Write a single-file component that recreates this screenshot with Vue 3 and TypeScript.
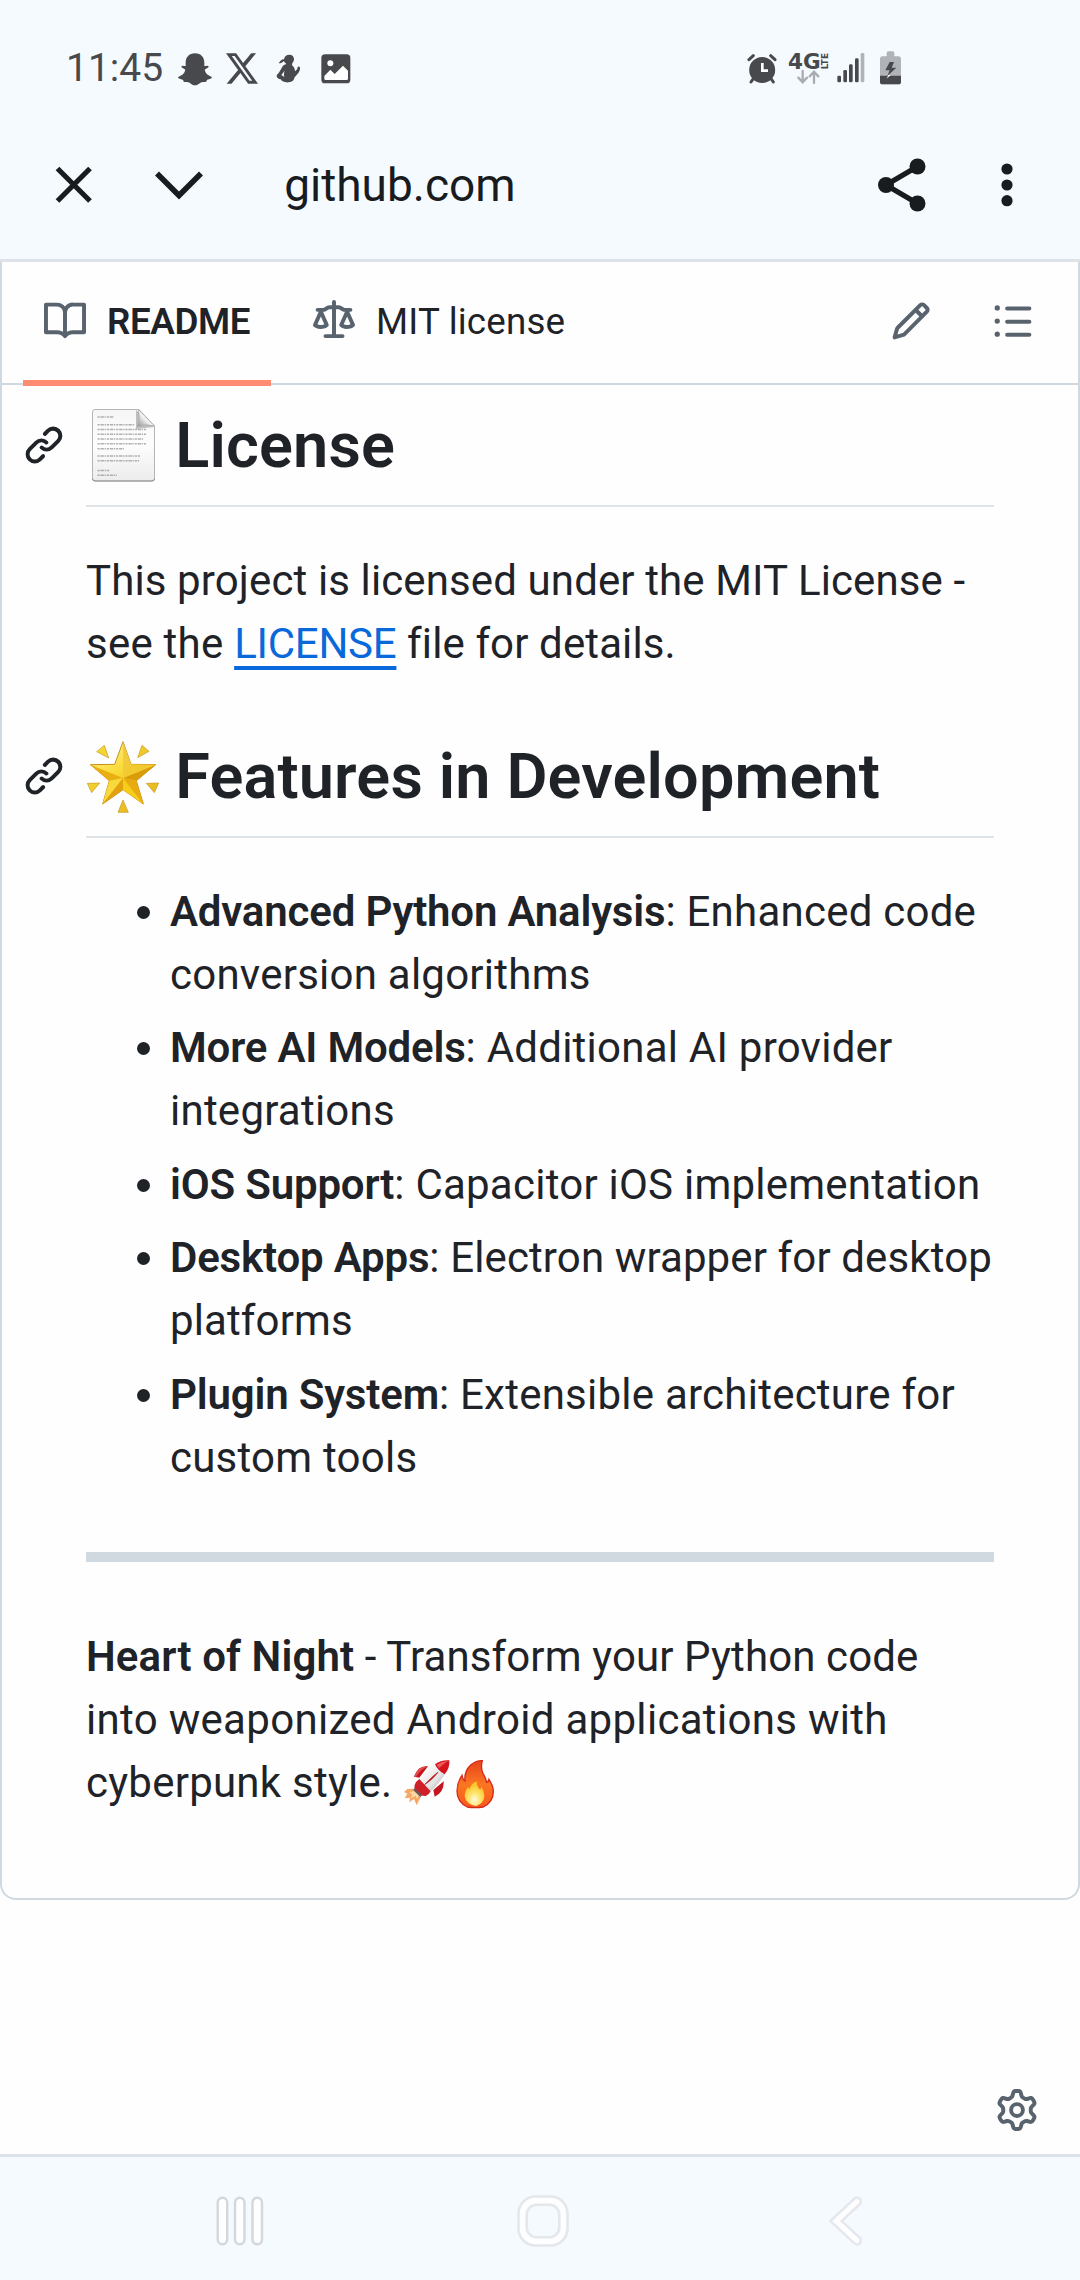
<script setup lang="ts">
interface Feature {
  name: string
  text: string
  tight?: boolean
}

const features: Feature[] = [
  { name: 'Advanced Python Analysis', text: 'Enhanced code conversion algorithms' },
  { name: 'More AI Models', text: 'Additional AI provider integrations' },
  { name: 'iOS Support', text: 'Capacitor iOS implementation' },
  { name: 'Desktop Apps', text: 'Electron wrapper for desktop platforms', tight: true },
  { name: 'Plugin System', text: 'Extensible architecture for custom tools' },
]

const icons = {
  book: 'M0 1.75A.75.75 0 0 1 .75 1h4.253c1.227 0 2.317.59 3 1.501A3.743 3.743 0 0 1 11.006 1h4.245a.75.75 0 0 1 .75.75v10.5a.75.75 0 0 1-.75.75h-4.507a2.25 2.25 0 0 0-1.591.659l-.622.621a.75.75 0 0 1-1.06 0l-.622-.621A2.25 2.25 0 0 0 5.258 13H.75a.75.75 0 0 1-.75-.75Zm7.251 10.324.004-5.073-.002-2.253A2.25 2.25 0 0 0 5.003 2.5H1.5v9h3.757a3.75 3.75 0 0 1 1.994.574ZM8.755 4.75l-.004 7.322a3.752 3.752 0 0 1 1.992-.572H14.5v-9h-3.495a2.25 2.25 0 0 0-2.25 2.25Z',
  law: 'M8.75.75V2h.985c.304 0 .603.08.867.231l1.29.736c.038.022.08.033.124.033h2.234a.75.75 0 0 1 0 1.5h-.427l2.111 4.692a.75.75 0 0 1-.154.838l-.53-.53.529.531-.001.002-.002.002-.006.006-.006.005-.01.01-.045.04c-.21.176-.441.327-.686.45C14.556 10.78 13.88 11 13 11a4.498 4.498 0 0 1-2.023-.454 3.544 3.544 0 0 1-.686-.45l-.045-.04-.016-.015-.006-.006-.004-.004v-.001a.75.75 0 0 1-.154-.838L12.178 4.5h-.162c-.305 0-.604-.079-.868-.231l-1.29-.736a.245.245 0 0 0-.124-.033H8.75V13h2.5a.75.75 0 0 1 0 1.5h-6.5a.75.75 0 0 1 0-1.5h2.5V3.5h-.984a.245.245 0 0 0-.124.033l-1.289.737c-.265.15-.564.23-.869.23h-.162l2.112 4.692a.75.75 0 0 1-.154.838l-.53-.53.529.531-.001.002-.002.002-.006.006-.016.015-.045.04c-.21.176-.441.327-.686.45C4.556 10.78 3.88 11 3 11a4.498 4.498 0 0 1-2.023-.454 3.544 3.544 0 0 1-.686-.45l-.045-.04-.016-.015-.006-.006-.004-.004v-.001a.75.75 0 0 1-.154-.838L2.178 4.5H1.75a.75.75 0 0 1 0-1.5h2.234a.249.249 0 0 0 .125-.033l1.288-.737c.265-.15.564-.23.869-.23h.984V.75a.75.75 0 0 1 1.5 0Zm2.945 8.477c.285.135.718.273 1.305.273s1.02-.138 1.305-.273L13 6.327Zm-10 0c.285.135.718.273 1.305.273s1.02-.138 1.305-.273L3 6.327Z',
  pencil: 'M11.013 1.427a1.75 1.75 0 0 1 2.474 0l1.086 1.086a1.75 1.75 0 0 1 0 2.474l-8.61 8.61c-.21.21-.47.364-.756.445l-3.251.93a.75.75 0 0 1-.927-.928l.929-3.25c.081-.286.235-.547.445-.758l8.61-8.61Zm.176 4.823L9.75 4.81l-6.286 6.287a.253.253 0 0 0-.064.108l-.558 1.953 1.953-.558a.253.253 0 0 0 .108-.064Zm1.238-3.763a.25.25 0 0 0-.354 0L10.811 3.75l1.439 1.44 1.263-1.263a.25.25 0 0 0 0-.354Z',
  list: 'M5.75 2.5h8.5a.75.75 0 0 1 0 1.5h-8.5a.75.75 0 0 1 0-1.5Zm0 5h8.5a.75.75 0 0 1 0 1.5h-8.5a.75.75 0 0 1 0-1.5Zm0 5h8.5a.75.75 0 0 1 0 1.5h-8.5a.75.75 0 0 1 0-1.5ZM2 14a1 1 0 1 1 0-2 1 1 0 0 1 0 2Zm1-6a1 1 0 1 1-2 0 1 1 0 0 1 2 0ZM2 4a1 1 0 1 1 0-2 1 1 0 0 1 0 2Z',
  link: 'm7.775 3.275 1.25-1.25a3.5 3.5 0 1 1 4.95 4.95l-2.5 2.5a3.5 3.5 0 0 1-4.95 0 .751.751 0 0 1 .018-1.042.751.751 0 0 1 1.042-.018 1.998 1.998 0 0 0 2.83 0l2.5-2.5a2.002 2.002 0 0 0-2.83-2.83l-1.25 1.25a.751.751 0 0 1-1.042-.018.751.751 0 0 1-.018-1.042Zm-4.69 9.64a1.998 1.998 0 0 0 2.83 0l1.25-1.25a.751.751 0 0 1 1.042.018.751.751 0 0 1 .018 1.042l-1.25 1.25a3.5 3.5 0 1 1-4.95-4.95l2.5-2.5a3.5 3.5 0 0 1 4.95 0 .751.751 0 0 1-.018 1.042.751.751 0 0 1-1.042.018 1.998 1.998 0 0 0-2.83 0l-2.5 2.5a1.998 1.998 0 0 0 0 2.83Z',
  gear: 'M8 0a8.2 8.2 0 0 1 .701.031C9.444.095 9.99.645 10.16 1.29l.288 1.107c.018.066.079.158.212.224.231.114.454.243.668.386.123.082.233.09.299.071l1.103-.303c.644-.176 1.392.021 1.82.63.27.385.506.792.704 1.218.315.675.111 1.422-.364 1.891l-.814.806c-.049.048-.098.147-.088.294.016.257.016.515 0 .772-.01.147.038.246.088.294l.814.806c.475.469.679 1.216.364 1.891a7.977 7.977 0 0 1-.704 1.217c-.428.61-1.176.807-1.82.63l-1.102-.302c-.067-.019-.177-.011-.3.071a5.909 5.909 0 0 1-.668.386c-.133.066-.194.158-.211.224l-.29 1.106c-.168.646-.715 1.196-1.458 1.26a8.006 8.006 0 0 1-1.402 0c-.743-.064-1.289-.614-1.458-1.26l-.289-1.106c-.018-.066-.079-.158-.212-.224a5.738 5.738 0 0 1-.668-.386c-.123-.082-.233-.09-.299-.071l-1.103.303c-.644.176-1.392-.021-1.82-.63a8.12 8.12 0 0 1-.704-1.218c-.315-.675-.111-1.422.363-1.891l.815-.806c.05-.048.098-.147.088-.294a6.214 6.214 0 0 1 0-.772c.01-.147-.038-.246-.088-.294l-.815-.806C.635 6.045.431 5.298.746 4.623a7.92 7.92 0 0 1 .704-1.217c.428-.61 1.176-.807 1.82-.63l1.102.302c.067.019.177.011.3-.071.214-.143.437-.272.668-.386.133-.066.194-.158.211-.224l.29-1.106C6.009.645 6.556.095 7.299.03 7.53.01 7.764 0 8 0Zm-.571 1.525c-.036.003-.108.036-.137.146l-.289 1.105c-.147.561-.549.967-.998 1.189-.173.086-.34.183-.5.29-.417.278-.97.423-1.529.27l-1.103-.303c-.109-.03-.175.016-.195.045-.22.312-.412.644-.573.99-.014.031-.021.11.059.19l.815.806c.411.406.562.957.53 1.456a4.709 4.709 0 0 0 0 .582c.032.499-.119 1.05-.53 1.456l-.815.806c-.081.08-.073.159-.059.19.162.346.353.677.573.989.02.03.085.076.195.046l1.102-.303c.56-.153 1.113-.008 1.53.27.161.107.328.204.501.29.447.222.85.629.997 1.189l.289 1.105c.029.109.101.143.137.146a6.6 6.6 0 0 0 1.142 0c.036-.003.108-.036.137-.146l.289-1.105c.147-.561.549-.967.998-1.189.173-.086.34-.183.5-.29.417-.278.97-.423 1.529-.27l1.103.303c.109.029.175-.016.195-.045.22-.313.411-.644.573-.99.014-.031.021-.11-.059-.19l-.815-.806c-.411-.406-.562-.957-.53-1.456a4.709 4.709 0 0 0 0-.582c-.032-.499.119-1.05.53-1.456l.815-.806c.081-.08.073-.159.059-.19a6.464 6.464 0 0 0-.573-.989c-.02-.03-.085-.076-.195-.046l-1.102.303c-.56.153-1.113.008-1.53-.27a4.44 4.44 0 0 0-.501-.29c-.447-.222-.85-.629-.997-1.189l-.289-1.105c-.029-.11-.101-.143-.137-.146a6.6 6.6 0 0 0-1.142 0ZM11 8a3 3 0 1 1-6 0 3 3 0 0 1 6 0ZM9.5 8a1.5 1.5 0 1 0-3.001.001A1.5 1.5 0 0 0 9.5 8Z',
}
</script>

<template>
  <div class="screen">
    <header class="chrome">
      <div class="status">
        <span class="time">11:45</span>
        <svg class="snap" width="36" height="35" viewBox="380 50 108 105">
          <path fill="#47494c" d="M434 54c18 0 28 12 28 28v10c4 0 10-3 13 1 1 4-7 7-12 10 2 11 10 17 20 21 2 1 2 4 0 5-4 3-10 3-13 5-2 3-1 6-5 6-6 0-10-1-15 2-5 4-9 8-16 8s-11-4-16-8c-5-3-9-2-15-2-4 0-3-3-5-6-3-2-9-2-13-5-2-1-2-4 0-5 10-4 18-10 20-21-5-3-13-6-12-10 3-4 9-1 13-1V82c0-16 10-28 28-28Z" />
        </svg>
        <svg class="x" width="34" height="35" viewBox="524 50 102 105">
          <path fill="#47494c" transform="translate(527 48.5) scale(4 4.25)" d="M18.901 1.153h3.68l-8.04 9.19L24 22.846h-7.406l-5.8-7.584-6.638 7.584H.474l8.6-9.83L0 1.154h7.594l5.243 6.932ZM17.61 20.644h2.039L6.486 3.24H4.298Z" />
        </svg>
        <svg class="figure" width="26" height="35" viewBox="674 50 78 105">
          <g fill="#47494c">
            <path d="M717 58c9 0 14 6 14 13 0 5-2 9-5 12l-1 7c6 5 9 10 9 18l5-5c3-3 2-7 4-9 3-2 7 1 6 6-1 6-3 11-7 15-4 5-6 7-9 10-1 9-7 15-18 16-12 1-21-3-24-9-6-1-12-5-12-10 0-4 5-7 8-12l10-17c2-4 6-5 10-6l-1-4c-3-1-4-3-5-6-5 3-9 9-16 6 0 0 3-3 5-6 3-3 6-5 11-5 1-8 7-14 16-14Z" />
            <path fill="#f5faff" d="m703 106-10 13 9 6c-2-7-1-13 1-19Z" />
          </g>
        </svg>
        <svg class="photo" width="32" height="35" viewBox="809 50 96 105">
          <rect x="813" y="57" width="87" height="87" rx="11" fill="#47494c" />
          <circle cx="840" cy="84" r="9" fill="#fff" />
          <path fill="#fff" d="m822 122 18-19 13 13 25-25 15 15v24q0 4-4 4h-63q-4 0-4-4Z" />
        </svg>
        <span class="spacer"></span>
        <svg width="30" height="35" viewBox="52 50 90 105">
          <g fill="none" stroke="#47494c" stroke-width="9" stroke-linecap="round">
            <path d="m58 73 13-12M136 73l-13-12M71 130l-7 10M124 130l7 10" />
          </g>
          <circle cx="97.500" cy="104" r="39" fill="#47494c" />
          <path d="M98 83v23h17" fill="none" stroke="#fff" stroke-width="8" />
        </svg>
        <svg class="lte" width="41" height="35" viewBox="176 50 123 105">
          <text class="gen" x="176" y="100" textLength="98" lengthAdjust="spacingAndGlyphs" font-size="63">4G</text>
          <text class="gen" transform="translate(295 102) rotate(-90)" textLength="49" lengthAdjust="spacingAndGlyphs" font-size="25">LTE</text>
          <path d="M220 107v33m-13-13 13 14 13-14M254 143v-33m-13 13 13-14 13 14" fill="none" stroke="#a9acb0" stroke-width="7" stroke-linecap="round" />
        </svg>
        <svg class="signal" width="30" height="35" viewBox="318 50 90 105">
          <g fill="#47494c">
            <rect x="322" y="121" width="11" height="20" rx="4" />
            <rect x="340" y="104" width="11" height="37" rx="4" />
            <rect x="357" y="87" width="11" height="54" rx="4" />
            <rect x="375" y="69" width="11" height="72" rx="4" />
          </g>
          <rect x="392" y="53" width="11" height="88" rx="4" fill="#b0b4b8" />
        </svg>
        <svg class="battery" width="23" height="35" viewBox="447 50 69 105">
          <path fill="#b0b4b8" d="M470 63V53q0-5 5-5h13q5 0 5 5v10h12q8 0 8 8v68q0 8-8 8h-47q-8 0-8-8V71q0-8 8-8Z" />
          <path fill="#47494c" d="M450 121h63v18q0 8-8 8h-47q-8 0-8-8Z" />
          <path fill="#47494c" d="m479 80-13 25h13l-7 17 27-25h-14l7-17Z" />
          <path fill="#fff" d="m475 119-5 11 12-11Z" />
        </svg>
      </div>
      <div class="toolbar">
        <svg width="38" height="38" viewBox="0 0 38 38">
          <path d="m2.500 2.500 32.500 32.500m0-32.500-32.500 32.500" stroke="#191c1e" stroke-width="5.200" />
        </svg>
        <svg class="chevron" width="48" height="30" viewBox="0 0 48 30">
          <path d="m2 3.500 22 22 22-22" fill="none" stroke="#191c1e" stroke-width="5.600" />
        </svg>
        <span class="url">github.com</span>
        <svg class="share" width="48" height="54" viewBox="0 0 48 54">
          <path d="M39.500 8.500 8 27l31.500 18.500" fill="none" stroke="#191c1e" stroke-width="5.300" />
          <g fill="#191c1e">
            <circle cx="39.500" cy="8.500" r="8" />
            <circle cx="8" cy="27" r="8" />
            <circle cx="39.500" cy="45.500" r="8" />
          </g>
        </svg>
        <svg width="12" height="44" viewBox="0 0 12 44">
          <g fill="#191c1e">
            <circle cx="6" cy="6" r="5.600" />
            <circle cx="6" cy="22" r="5.600" />
            <circle cx="6" cy="37.700" r="5.600" />
          </g>
        </svg>
      </div>
    </header>

    <main class="page">
      <section class="card">
        <nav class="tabs">
          <a class="tab active">
            <svg class="oct" viewBox="0 0 16 16"><path :d="icons.book" /></svg>
            <span>README</span>
          </a>
          <a class="tab">
            <svg class="oct" viewBox="0 0 16 16"><path :d="icons.law" /></svg>
            <span>MIT license</span>
          </a>
          <span class="spacer"></span>
          <svg class="oct edit" viewBox="0 0 16 16"><path :d="icons.pencil" /></svg>
          <svg class="oct outline" viewBox="0 0 16 16"><path :d="icons.list" /></svg>
        </nav>

        <article class="markdown">
          <h2>
            <svg class="oct anchor" viewBox="0 0 16 16"><path :d="icons.link" /></svg>
            <svg class="emoji-lg" viewBox="0 0 75 75">
              <defs>
                <linearGradient id="sheet" x1="0" y1="0" x2="0" y2="1">
                  <stop offset="0" stop-color="#f6f6f6" />
                  <stop offset=".5" stop-color="#fdfdfd" />
                  <stop offset="1" stop-color="#ececec" />
                </linearGradient>
                <linearGradient id="fold" x1="0" y1="1" x2="1" y2="0">
                  <stop offset="0" stop-color="#8c8c8c" />
                  <stop offset=".45" stop-color="#f4f4f4" />
                  <stop offset="1" stop-color="#cfcfcf" />
                </linearGradient>
              </defs>
              <path d="M9 2.500h44L68.500 19v52.500q0 2.500-2.500 2.500H9q-2.500 0-2.500-2.500V5q0-2.500 2.500-2.500Z" fill="url(#sheet)" stroke="#b5b5b5" />
              <path d="M6.500 71.500q0 2.500 2.500 2.500h57q2.500 0 2.500-2.500" fill="none" stroke="#8f8f8f" />
              <path d="M50 3v19l18-2Z" fill="#777" opacity=".45" />
              <path d="M52.500 2.500q2 8-1 17 8-3 17-.5Z" fill="url(#fold)" stroke="#a8a8a8" stroke-width=".8" />
              <g fill="none" stroke="#808080" stroke-width="1.600" stroke-dasharray="2.200 .8 3.400 .7 1.300 .9" opacity=".6">
                <path d="M11.500 10H28M11.500 17.700H49M11.500 22.500H60M11.500 27.300H60M11.500 32H58M11.500 36.800H60M11.500 41.700H38M11.500 49H54M11.500 53.700H53M11.500 63.500H24M11.500 68.300H31" />
              </g>
            </svg>
            License
          </h2>
          <p>
            <span class="tight">This project is licensed under the MIT License -</span>
            see the <a class="link">LICENSE</a> <span class="tight">file for details.</span>
          </p>

          <h2>
            <svg class="oct anchor" viewBox="0 0 16 16"><path :d="icons.link" /></svg>
            <svg class="emoji-lg" viewBox="258 55 225 225">
              <defs>
                <linearGradient id="ray" x1="0" y1="0" x2="1" y2="1">
                  <stop offset="0" stop-color="#f8dc35" />
                  <stop offset="1" stop-color="#e4b41c" />
                </linearGradient>
                <linearGradient id="gold" x1="0" y1="0" x2=".6" y2="1">
                  <stop offset="0" stop-color="#fdf3a8" />
                  <stop offset=".5" stop-color="#fbdc3c" />
                  <stop offset="1" stop-color="#eeb713" />
                </linearGradient>
              </defs>
              <path d="m369 66 24 68 74 1-58 48 21 70-61-43-61 43 20-70-57-48 73-1Z" fill="url(#gold)" stroke="#c8901a" stroke-width="3" stroke-linejoin="round" />
              <path d="m369 66 24 68-24 41Z" fill="#f1cb3a" />
              <path d="m467 135-98 40 40 8Z" fill="#d99d0b" />
              <path d="m393 134 74 1-98 40Z" fill="#f3c930" />
              <path d="m369 175 61 78-61-43Z" fill="#f7cd1c" />
              <path d="m369 175 40 8 21 70Z" fill="#e8ab12" />
              <path d="m369 175-61 78 20-70Z" fill="#f8d93c" />
              <path d="M369 175v35l-61 43Z" fill="#e2a20e" />
              <path d="m271 135 98 40-41 8Z" fill="#eab012" />
              <g fill="url(#ray)" stroke="#c99522" stroke-width="2" stroke-linejoin="round">
                <path d="m313 77 13 38-36-19ZM426 77l21 18-34 19ZM262 191l37-1-24 29ZM439 191l37-1-13 29ZM369 241l16 37h-31Z" />
              </g>
            </svg>
            Features in Development
          </h2>
          <ul>
            <li v-for="f in features" :key="f.name"><strong>{{ f.name }}</strong><span :class="{ tight: f.tight }">: {{ f.text }}</span></li>
          </ul>
          <hr />
          <p>
            <strong class="name">Heart of Night</strong> <span class="tight">- Transform your Python code</span>
            <span class="loose"> into weaponized Android applications with</span>
            cyberpunk style.
            <span class="pair"><svg class="emoji" viewBox="60 50 150 150">
              <defs>
                <linearGradient id="hull" x1="0" y1="0" x2="1" y2="1">
                  <stop offset=".2" stop-color="#fff" />
                  <stop offset=".6" stop-color="#e4e4e4" />
                  <stop offset="1" stop-color="#8d8d8d" />
                </linearGradient>
              </defs>
              <path d="m104 142-22 1-10 9 10 5-8 14 16-2-2 14 14-10 8 19 16-34Z" fill="#f6a868" />
              <path d="m106 148-18 5 8 6-3 12 14-8 4 10 9-15Z" fill="#fbd9a4" />
              <path d="M144 75q-29-4-42 31l16 3ZM191 120q2 32-27 46l-4-20Z" fill="#c5161f" />
              <path d="M144 75q-29-4-42 31l6 1q14-24 36-32Z" fill="#e34a4a" />
              <path d="M166 66q-34 20-62 65-3 12 7 22 8 10 23 11 36-25 61-66Z" fill="url(#hull)" />
              <path d="M118 113q-12 8-14 18-3 12 7 22 9 11 26 11 10-3 15-14Z" fill="#cf2029" />
              <path d="m104 140 22 22-5 5-21-20Z" fill="#6b5a5a" />
              <path d="M208 57q-24-2-43 12 9 20 29 30 16-19 14-42Z" fill="#d3141d" />
              <path d="M204 59q-17 0-34 11l7 10q13-12 27-21Z" fill="#ed5a58" />
              <path d="M174 93q-14 9-40 37 24-15 40-37Z" fill="#d0202a" stroke="#b01820" stroke-width="2" />
            </svg><svg class="emoji" viewBox="210 50 150 150">
              <defs>
                <linearGradient id="flame" x1="0" y1="0" x2="0" y2="1">
                  <stop offset="0" stop-color="#e8421c" />
                  <stop offset=".5" stop-color="#fb7622" />
                  <stop offset="1" stop-color="#f85a1c" />
                </linearGradient>
                <radialGradient id="core" cx=".5" cy=".75" r=".6">
                  <stop offset="0" stop-color="#fffbe0" />
                  <stop offset=".5" stop-color="#fde56c" />
                  <stop offset="1" stop-color="#fbc62a" />
                </radialGradient>
              </defs>
              <path d="M307 58q-6 20 2 38 8 14 11 27 6-2 7-9 13 20 13 37 0 30-30 46-26 4-48 0-31-15-31-48 0-25 15-47 1 12 9 17-3-29 17-48 18-14 35-13Z" fill="url(#flame)" stroke="#d42a1d" stroke-width="4" />
              <path d="M291 120q-4 13 10 25l3-9q9 13 9 27 0 21-24 31-31-4-35-30 0-15 11-28l3 9q5-20 23-25Z" fill="url(#core)" />
            </svg></span>
          </p>
        </article>
      </section>
      <svg class="oct gear" viewBox="0 0 16 16"><path :d="icons.gear" /></svg>
    </main>

    <footer class="navbar">
      <svg width="48" height="52" viewBox="0 0 48 52">
        <g fill="#fefeff" stroke="#d3d7da" stroke-width="2.400">
          <rect x="1.700" y="2.700" width="9.500" height="46.500" rx="4.700" />
          <rect x="19" y="2.700" width="9.500" height="46.500" rx="4.700" />
          <rect x="36.500" y="2.700" width="9.500" height="46.500" rx="4.700" />
        </g>
      </svg>
      <svg class="home" width="52" height="52" viewBox="0 0 52 52">
        <rect x="1.500" y="1.500" width="49" height="49" rx="17" fill="#fefeff" stroke="#e4e7ec" stroke-width="2.600" />
        <rect x="9.700" y="9.700" width="32.600" height="32.600" rx="10" fill="#f5faff" stroke="#e4e7ec" stroke-width="2.600" />
      </svg>
      <svg class="back" width="34" height="52" viewBox="0 0 34 52">
        <g fill="none" stroke-linecap="round">
          <path d="M28 6.500 7 26l21 19.500" stroke="#e4e7ec" stroke-width="10" />
          <path d="M28 6.500 7 26l21 19.500" stroke="#fefeff" stroke-width="5.200" />
        </g>
      </svg>
    </footer>
  </div>
</template>

<style>
body {
  margin: 0;
}
</style>

<style scoped>
.screen {
  width: 1080px;
  height: 2280px;
  display: flex;
  flex-direction: column;
  overflow: hidden;
  background: #fefeff;
  color: #1f2328;
  font-family: Roboto, 'Liberation Sans', sans-serif;
  font-size: 42px;
  line-height: 63px;
}
svg {
  display: block;
  flex: none;
  overflow: visible;
}
.spacer {
  flex: 1;
}
.chrome {
  box-sizing: border-box;
  height: 262px;
  background: #f5faff;
  border-bottom: 3px solid #dce2e8;
}
.status {
  height: 138px;
  display: flex;
  align-items: center;
  padding: 0 178px 0 66px;
}
.time {
  width: 110.600px;
  color: #47494c;
  font-size: 39px;
  position: relative;
  top: -1px;
}
.gen {
  fill: #47494c;
  font-family: 'DejaVu Sans', sans-serif;
  font-weight: 700;
}
.x { margin-left: 12px; }
.figure { margin-left: 16px; }
.photo { margin-left: 19px; }
.lte { margin-left: 11px; }
.signal { margin-left: 7px; }
.battery { margin-left: 13px; }
.toolbar {
  height: 94px;
  display: flex;
  align-items: center;
  padding: 0 67.500px 0 54.700px;
}
.chevron { margin-left: 62px; }
.url {
  flex: 1;
  margin-left: 81.500px;
  color: #191c1e;
  font-size: 46px;
}
.share { margin-right: 75px; }
.page {
  flex: 1;
  display: flex;
  flex-direction: column;
}
.card {
  border: 2px solid #d1d9e0;
  border-top: 0;
  border-radius: 0 0 16px 16px;
}
.oct {
  width: 42px;
  height: 42px;
  fill: #59636e;
}
.tabs {
  box-sizing: border-box;
  height: 123px;
  display: flex;
  align-items: stretch;
  gap: 21px;
  padding: 0 44px 0 21px;
  border-bottom: 2px solid #d1d9e0;
}
.tab {
  box-sizing: border-box;
  height: 124px;
  display: flex;
  align-items: center;
  gap: 21px;
  padding: 0 21px;
  font-size: 36.750px;
  letter-spacing: 0.180px;
  border-bottom: 6px solid transparent;
}
.tab.active {
  font-weight: 600;
  letter-spacing: -0.400px;
  border-bottom-color: #fd8c73;
}
.edit,
.outline {
  align-self: center;
  margin-top: -3px;
}
.edit { margin-right: 39px; }
.markdown {
  padding: 22px 84px 84px;
  letter-spacing: 0.240px;
}
h2 {
  position: relative;
  margin: 0 0 42px;
  padding-bottom: 19px;
  border-bottom: 2px solid #dfe4e9;
  font-size: 63px;
  font-weight: 600;
  line-height: 78.750px;
  letter-spacing: 0.150px;
  white-space: nowrap;
}
p + h2 {
  margin-top: 63px;
}
.anchor {
  position: absolute;
  left: -63px;
  top: 17px;
  fill: #1f2328;
}
.emoji-lg {
  display: inline-block;
  width: 75px;
  height: 75px;
  margin-right: -1.500px;
  vertical-align: -15px;
}
p {
  margin: 0;
}
strong {
  font-weight: 600;
  letter-spacing: -0.180px;
}
.name { letter-spacing: 0.100px; }
.tight { letter-spacing: 0.120px; }
.loose { letter-spacing: 0.310px; }
.link {
  color: #0969da;
  letter-spacing: -0.250px;
  text-decoration: underline;
  text-decoration-thickness: 4px;
  text-underline-offset: 8px;
}
ul {
  margin: 0;
  padding-left: 84px;
}
li + li {
  margin-top: 10.500px;
}
hr {
  height: 10.500px;
  margin: 63px 0;
  border: 0;
  background: #d1d9e0;
}
.pair {
  margin-left: -3px;
  white-space: nowrap;
}
.emoji {
  display: inline-block;
  width: 50px;
  height: 50px;
  vertical-align: -11px;
}
.gear {
  align-self: flex-end;
  margin: auto 42px 23px 0;
}
.navbar {
  box-sizing: border-box;
  height: 126px;
  display: flex;
  align-items: center;
  padding: 5px 218px 0 216px;
  background: #f5faff;
  border-top: 3px solid #dce2e8;
}
.home { margin-left: 252.500px; }
.back { margin-left: 260px; }
</style>
